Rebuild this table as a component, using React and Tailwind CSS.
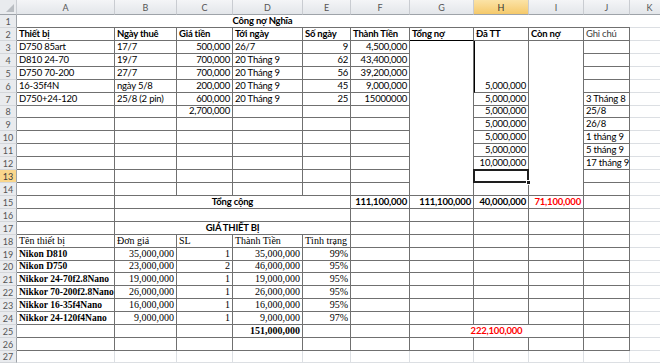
import React from 'react';

const box = 'border-r border-b border-[#707070]';
const gl = 'border-r border-b border-[#dcdfe3]';
const bot = 'border-b border-[#707070]';
const botl = 'border-b border-[#dcdfe3]';

const cols = ['A', 'B', 'C', 'D', 'E', 'F', 'G', 'H', 'I', 'J', 'K'];

function C({ b = box, a = 'l', className = '', children }) {
  const al = a === 'r' ? 'justify-end' : a === 'c' ? 'justify-center' : 'justify-start';
  return (
    <div className={`${b} ${al} flex items-end px-[2px] overflow-hidden whitespace-nowrap leading-[12px] ${className}`}>
      {children}
    </div>
  );
}

function RowHead({ n, active }) {
  return (
    <div
      className={`flex items-center justify-center border-r border-b border-r-[#9ea3a9] border-b-[#d3d6da] text-[9px] tracking-normal leading-none ${
        active ? 'bg-[#f9d68c] text-[#3a3a3a]' : 'bg-[#e9ebee] text-[#555]'
      }`}
    >
      {n}
    </div>
  );
}

const upper = [
  ['D750 85art', '17/7', '500,000', '26/7', '9', '4,500,000'],
  ['D810 24-70', '19/7', '700,000', '20 Tháng 9', '62', '43,400,000'],
  ['D750 70-200', '27/7', '700,000', '20 Tháng 9', '56', '39,200,000'],
  ['16-35f4N', 'ngày 5/8', '200,000', '20 Tháng 9', '45', '9,000,000'],
  ['D750+24-120', '25/8 (2 pin)', '600,000', '20 Tháng 9', '25', '15000000'],
  ['', '', '2,700,000', '', '', ''],
  ['', '', '', '', '', ''],
  ['', '', '', '', '', ''],
  ['', '', '', '', '', ''],
  ['', '', '', '', '', ''],
  ['', '', '', '', '', ''],
  ['', '', '', '', '', ''],
];
const upperAlign = ['l', 'l', 'r', 'l', 'r', 'r'];

const paid = { 7: '5,000,000', 8: '5,000,000', 9: '5,000,000', 10: '5,000,000', 11: '5,000,000', 12: '10,000,000' };
const notes = { 7: '3 Tháng 8', 8: '25/8', 9: '26/8', 10: '1 tháng 9', 11: '5 tháng 9', 12: '17 tháng 9' };

const devices = [
  ['Nikon D810', '35,000,000', '1', '35,000,000', '99%'],
  ['Nikon D750', '23,000,000', '2', '46,000,000', '95%'],
  ['Nikkor 24-70f2.8Nano', '19,000,000', '1', '19,000,000', '95%'],
  ['Nikkor 70-200f2.8Nano', '26,000,000', '1', '26,000,000', '95%'],
  ['Nikkor 16-35f4Nano', '16,000,000', '1', '16,000,000', '95%'],
  ['Nikkor 24-120f4Nano', '9,000,000', '1', '9,000,000', '97%'],
];

const serif = "font-['Liberation_Serif',serif] text-[10px] tracking-normal";

function Empties({ from, count, b = box }) {
  return Array.from({ length: count }, (_, i) => <C key={from + i} b={b} />);
}

export default function App() {
  const cells = [];

  // column header
  cells.push(
    <div key="corner" className="relative bg-[#e9ebee] border-r border-b border-r-[#c9ccd1] border-b-[#9ea3a9]">
      <svg className="absolute right-[2px] bottom-[2px]" width="8" height="8" viewBox="0 0 8 8">
        <path d="M8 0 L8 8 L0 8 Z" fill="#b9bdc2" />
      </svg>
    </div>
  );
  cols.forEach((c) =>
    cells.push(
      <div
        key={'h' + c}
        className={`flex items-center justify-center border-r border-b border-r-[#c9ccd1] border-b-[#9ea3a9] text-[9px] tracking-normal leading-none ${
          c === 'H' ? 'bg-gradient-to-b from-[#fbe3a6] to-[#f5c96a] text-[#333]' : 'bg-gradient-to-b from-[#f4f5f7] to-[#e3e6ea] text-[#555]'
        }`}
      >
        {c}
      </div>
    )
  );

  // row 1
  cells.push(<RowHead key="r1" n={1} />);
  cells.push(<C key="a1" b={bot} />);
  cells.push(
    <C key="b1" b={bot} a="c" className="col-span-5 font-bold">
      Công nợ Nghĩa
    </C>
  );
  cells.push(<C key="g1" b={bot} />, <C key="h1" b={bot} />, <C key="i1" b={bot} />, <C key="j1" b={bot} />, <C key="k1" b={botl} />);

  // row 2
  cells.push(<RowHead key="r2" n={2} />);
  ['Thiết bị', 'Ngày thuê', 'Giá tiền', 'Tới ngày', 'Số ngày', 'Thành Tiền'].forEach((t) =>
    cells.push(
      <C key={'2' + t} className="font-bold">
        {t}
      </C>
    )
  );
  cells.push(
    <C key="g2" b="border-r border-b border-r-[#707070] border-b-black" className="font-bold">
      Tổng nợ
    </C>
  );
  cells.push(
    <C key="h2" className="font-bold">
      Đã TT
    </C>
  );
  cells.push(
    <C key="i2" className="font-bold">
      Còn nợ
    </C>
  );
  cells.push(
    <C key="j2" className="text-[#3c3c3c]">
      Ghi chú
    </C>
  );
  cells.push(<C key="k2" b={gl} />);

  // rows 3-14
  upper.forEach((row, i) => {
    const n = i + 3;
    cells.push(<RowHead key={'r' + n} n={n} active={n === 13} />);
    row.forEach((v, j) =>
      cells.push(
        <C key={n + '-' + j} a={upperAlign[j]}>
          {v}
        </C>
      )
    );
    if (n === 3) {
      cells.push(<C key="g3" className="row-span-12" />);
      cells.push(
        <C key="h3" a="r" className="row-span-4 border-l border-l-black">
          5,000,000
        </C>
      );
      cells.push(<C key="i3" className="row-span-12" />);
    } else if (n >= 7) {
      cells.push(
        <C key={'h' + n} a="r" className={n === 13 ? 'relative overflow-visible' : ''}>
          {paid[n] || ''}
          {n === 13 && (
            <>
              <div className="absolute -left-[1px] -top-[1px] -right-[1px] -bottom-[1px] border-2 border-[#1e1e1e]" />
              <div className="absolute -right-[3px] -bottom-[3px] w-[5px] h-[5px] bg-[#1e1e1e] border border-white" />
            </>
          )}
        </C>
      );
    }
    cells.push(<C key={'j' + n}>{notes[n] || ''}</C>);
    cells.push(<C key={'k' + n} b={gl} />);
  });

  // row 15
  cells.push(<RowHead key="r15" n={15} />);
  cells.push(<C key="a15" />);
  cells.push(
    <C key="b15" a="c" className="col-span-4 font-bold">
      Tổng cộng
    </C>
  );
  cells.push(
    <C key="f15" a="r" className="font-bold">
      111,100,000
    </C>
  );
  cells.push(
    <C key="g15" a="r" className="font-bold">
      111,100,000
    </C>
  );
  cells.push(
    <C key="h15" a="r" className="font-bold">
      40,000,000
    </C>
  );
  cells.push(
    <C key="i15" a="r" className="font-bold text-[#ff0000]">
      71,100,000
    </C>
  );
  cells.push(<C key="j15" />, <C key="k15" b={gl} />);

  // row 16
  cells.push(<RowHead key="r16" n={16} />);
  cells.push(<C key="a16" />, <C key="b16" className="col-span-4" />);
  cells.push(<Empties key="e16" from="16f" count={5} />);
  cells.push(<C key="k16" b={gl} />);

  // row 17
  cells.push(<RowHead key="r17" n={17} />);
  cells.push(<C key="a17" />);
  cells.push(
    <C key="b17" a="c" className="col-span-4 font-bold">
      GIÁ THIẾT BỊ
    </C>
  );
  cells.push(<Empties key="e17" from="17f" count={5} />);
  cells.push(<C key="k17" b={gl} />);

  // row 18
  cells.push(<RowHead key="r18" n={18} />);
  ['Tên thiết bị', 'Đơn giá', 'SL', 'Thành Tiền', 'Tình trạng'].forEach((t) =>
    cells.push(
      <C key={'18' + t} className={serif}>
        {t}
      </C>
    )
  );
  cells.push(<Empties key="e18" from="18f" count={5} />);
  cells.push(<C key="k18" b={gl} />);

  // rows 19-24
  devices.forEach((d, i) => {
    const n = i + 19;
    cells.push(<RowHead key={'r' + n} n={n} />);
    d.forEach((v, j) =>
      cells.push(
        <C
          key={n + '-' + j}
          a={j === 0 ? 'l' : 'r'}
          className={j === 0 ? "font-['Liberation_Serif',serif] text-[9.5px] tracking-normal font-bold" : serif}
        >
          {v}
        </C>
      )
    );
    cells.push(<Empties key={'e' + n} from={n + 'f'} count={5} />);
    cells.push(<C key={'k' + n} b={gl} />);
  });

  // row 25
  cells.push(<RowHead key="r25" n={25} />);
  cells.push(<C key="a25" />, <C key="b25" />, <C key="c25" />);
  cells.push(
    <C key="d25" a="r" className={`${serif} font-bold`}>
      151,000,000
    </C>
  );
  cells.push(<C key="e25" />, <C key="f25" />);
  cells.push(
    <C key="g25" a="c" className="col-span-3 font-bold text-[#ff0000]">
      222,100,000
    </C>
  );
  cells.push(<C key="j25" />, <C key="k25" b={gl} />);

  // row 26
  cells.push(<RowHead key="r26" n={26} />);
  cells.push(<Empties key="e26" from="26a" count={10} />);
  cells.push(<C key="k26" b={gl} />);

  // row 27
  cells.push(<RowHead key="r27" n={27} />);
  cells.push(<Empties key="e27" from="27a" count={11} b={gl} />);

  return (
    <div className="w-[660px] h-[363px] overflow-hidden bg-white font-['Lato','Liberation_Sans',sans-serif] text-[9.5px] tracking-[-0.2px] text-black">
      <div className="grid grid-cols-[17px_98px_62px_56px_70px_48px_59px_64px_55px_55px_46px_40px] grid-rows-[15px_13px_13px_13px_13px_13px_13px_13px_12px_13px_13px_13px_13px_13px_13px_13px_13px_13px_13px_13px_12px_13px_13px_13px_13px_13px_13px_12px]">
        {cells}
      </div>
    </div>
  );
}
